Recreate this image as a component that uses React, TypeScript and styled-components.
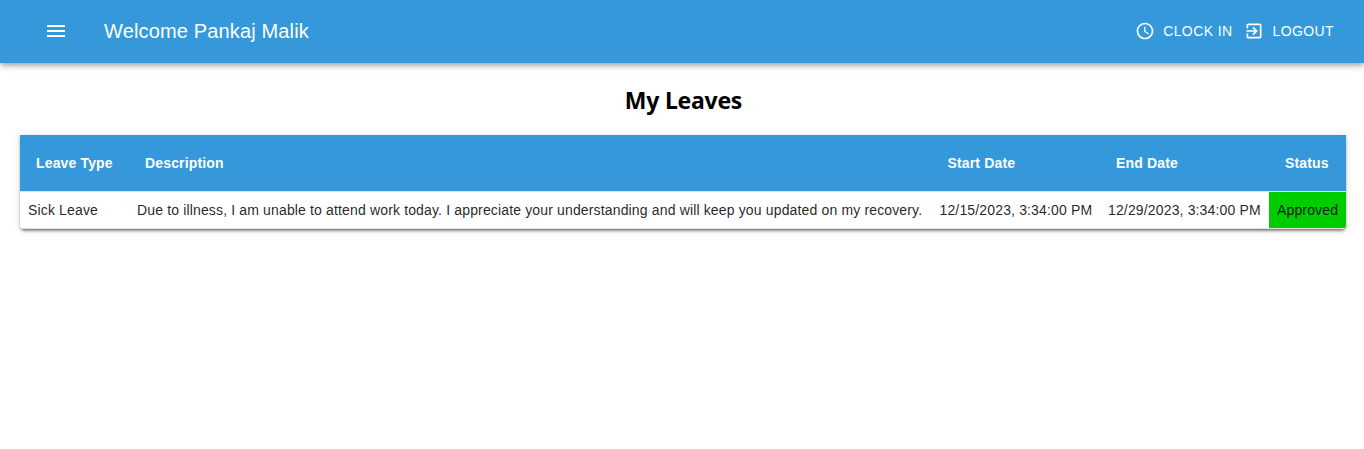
import React from "react";
import styled, { createGlobalStyle } from "styled-components";

const GlobalStyle = createGlobalStyle`
  body {
    margin: 0;
    background: #fff;
    color: #000;
    font-family: "Liberation Sans", Arial, sans-serif;
  }
  * { box-sizing: border-box; }
`;

const Page = styled.main`
  min-height: 100vh;
`;

const AppBar = styled.header`
  display: flex;
  align-items: center;
  height: 63px;
  padding: 0 30px 2px 44px;
  background: #3498db;
  color: #fff;
  box-shadow: 0 2px 4px -1px rgba(0, 0, 0, 0.2), 0 4px 5px rgba(0, 0, 0, 0.14),
    0 1px 10px rgba(0, 0, 0, 0.12);
`;

const Icon = styled.svg<{ $size: number }>`
  display: block;
  width: ${(p) => p.$size}px;
  height: ${(p) => p.$size}px;
  fill: currentColor;
`;

const IconButton = styled.button`
  padding: 0;
  border: 0;
  background: none;
  color: inherit;
`;

const Welcome = styled.div`
  flex: 1;
  margin-left: 36px;
  font-size: 20px;
  letter-spacing: 0.15px;
  line-height: 32px;
`;

const Actions = styled.div`
  display: flex;
  gap: 12px;
`;

const ActionButton = styled(IconButton)`
  display: flex;
  align-items: center;
  gap: 8px;
  font: 14px/24px "Liberation Sans", Arial, sans-serif;
  letter-spacing: 0.4px;
  text-transform: uppercase;
`;

const Title = styled.h2`
  margin: 21px 0 19px;
  padding-left: 3px;
  text-align: center;
  font: 700 23px/32px "Noto Sans", "Open Sans", sans-serif;
  letter-spacing: -0.25px;
`;

const TableCard = styled.div`
  margin: 0 18px 0 20px;
  border-radius: 0 0 4px 4px;
  overflow: hidden;
  box-shadow: 0 3px 3px -2px rgba(0, 0, 0, 0.4), 0 2px 3px rgba(0, 0, 0, 0.24),
    0 1px 8px rgba(0, 0, 0, 0.12);
`;

const Table = styled.table`
  width: 100%;
  table-layout: fixed;
  border-collapse: separate;
  border-spacing: 0;
  font-size: 14px;
  letter-spacing: 0.15px;
  white-space: nowrap;
`;

const HeadCell = styled.th`
  height: 57px;
  padding: 0 16px;
  background: #3498db;
  border-bottom: 1px solid #e0e0e0;
  color: #fff;
  text-align: left;
`;

const Cell = styled.td<{ $approved?: boolean }>`
  height: 37px;
  padding: 0 8px;
  border-bottom: 1px solid #e0e0e0;
  background: ${(p) => (p.$approved ? "#00cc00" : "#fff")};
  background-clip: padding-box;
  color: rgba(0, 0, 0, 0.87);
`;

const leaves = [
  {
    type: "Sick Leave",
    description:
      "Due to illness, I am unable to attend work today. I appreciate your understanding and will keep you updated on my recovery.",
    start: "12/15/2023, 3:34:00 PM",
    end: "12/29/2023, 3:34:00 PM",
    status: "Approved",
  },
];

export default function App() {
  return (
    <Page>
      <GlobalStyle />
      <AppBar>
        <IconButton aria-label="Menu">
          <Icon $size={24} viewBox="0 0 24 24">
            <path d="M3 18h18v-2H3v2zm0-5h18v-2H3v2zm0-7v2h18V6H3z" />
          </Icon>
        </IconButton>
        <Welcome>Welcome Pankaj Malik</Welcome>
        <Actions>
          <ActionButton>
            <Icon $size={20} viewBox="0 0 24 24">
              <path d="M11.99 2C6.47 2 2 6.48 2 12s4.47 10 9.99 10C17.52 22 22 17.52 22 12S17.52 2 11.99 2zM12 20c-4.42 0-8-3.58-8-8s3.58-8 8-8 8 3.58 8 8-3.58 8-8 8zm.5-13H11v6l5.25 3.15.75-1.23-4.5-2.67z" />
            </Icon>
            Clock In
          </ActionButton>
          <ActionButton>
            <Icon $size={20} viewBox="0 0 24 24">
              <path d="M10.09 15.59 11.5 17l5-5-5-5-1.41 1.41L12.67 11H3v2h9.67l-2.58 2.59zM19 3H5c-1.11 0-2 .9-2 2v4h2V5h14v14H5v-4H3v4c0 1.1.89 2 2 2h14c1.1 0 2-.9 2-2V5c0-1.1-.9-2-2-2z" />
            </Icon>
            Logout
          </ActionButton>
        </Actions>
      </AppBar>
      <Title>My Leaves</Title>
      <TableCard>
        <Table>
          <colgroup>
            <col style={{ width: 109 }} />
            <col style={{ width: 802.5 }} />
            <col style={{ width: 168.5 }} />
            <col style={{ width: 169 }} />
            <col style={{ width: 77 }} />
          </colgroup>
          <thead>
            <tr>
              <HeadCell>Leave Type</HeadCell>
              <HeadCell>Description</HeadCell>
              <HeadCell>Start Date</HeadCell>
              <HeadCell>End Date</HeadCell>
              <HeadCell>Status</HeadCell>
            </tr>
          </thead>
          <tbody>
            {leaves.map((leave) => (
              <tr key={leave.start}>
                <Cell>{leave.type}</Cell>
                <Cell>{leave.description}</Cell>
                <Cell>{leave.start}</Cell>
                <Cell>{leave.end}</Cell>
                <Cell $approved>{leave.status}</Cell>
              </tr>
            ))}
          </tbody>
        </Table>
      </TableCard>
    </Page>
  );
}
